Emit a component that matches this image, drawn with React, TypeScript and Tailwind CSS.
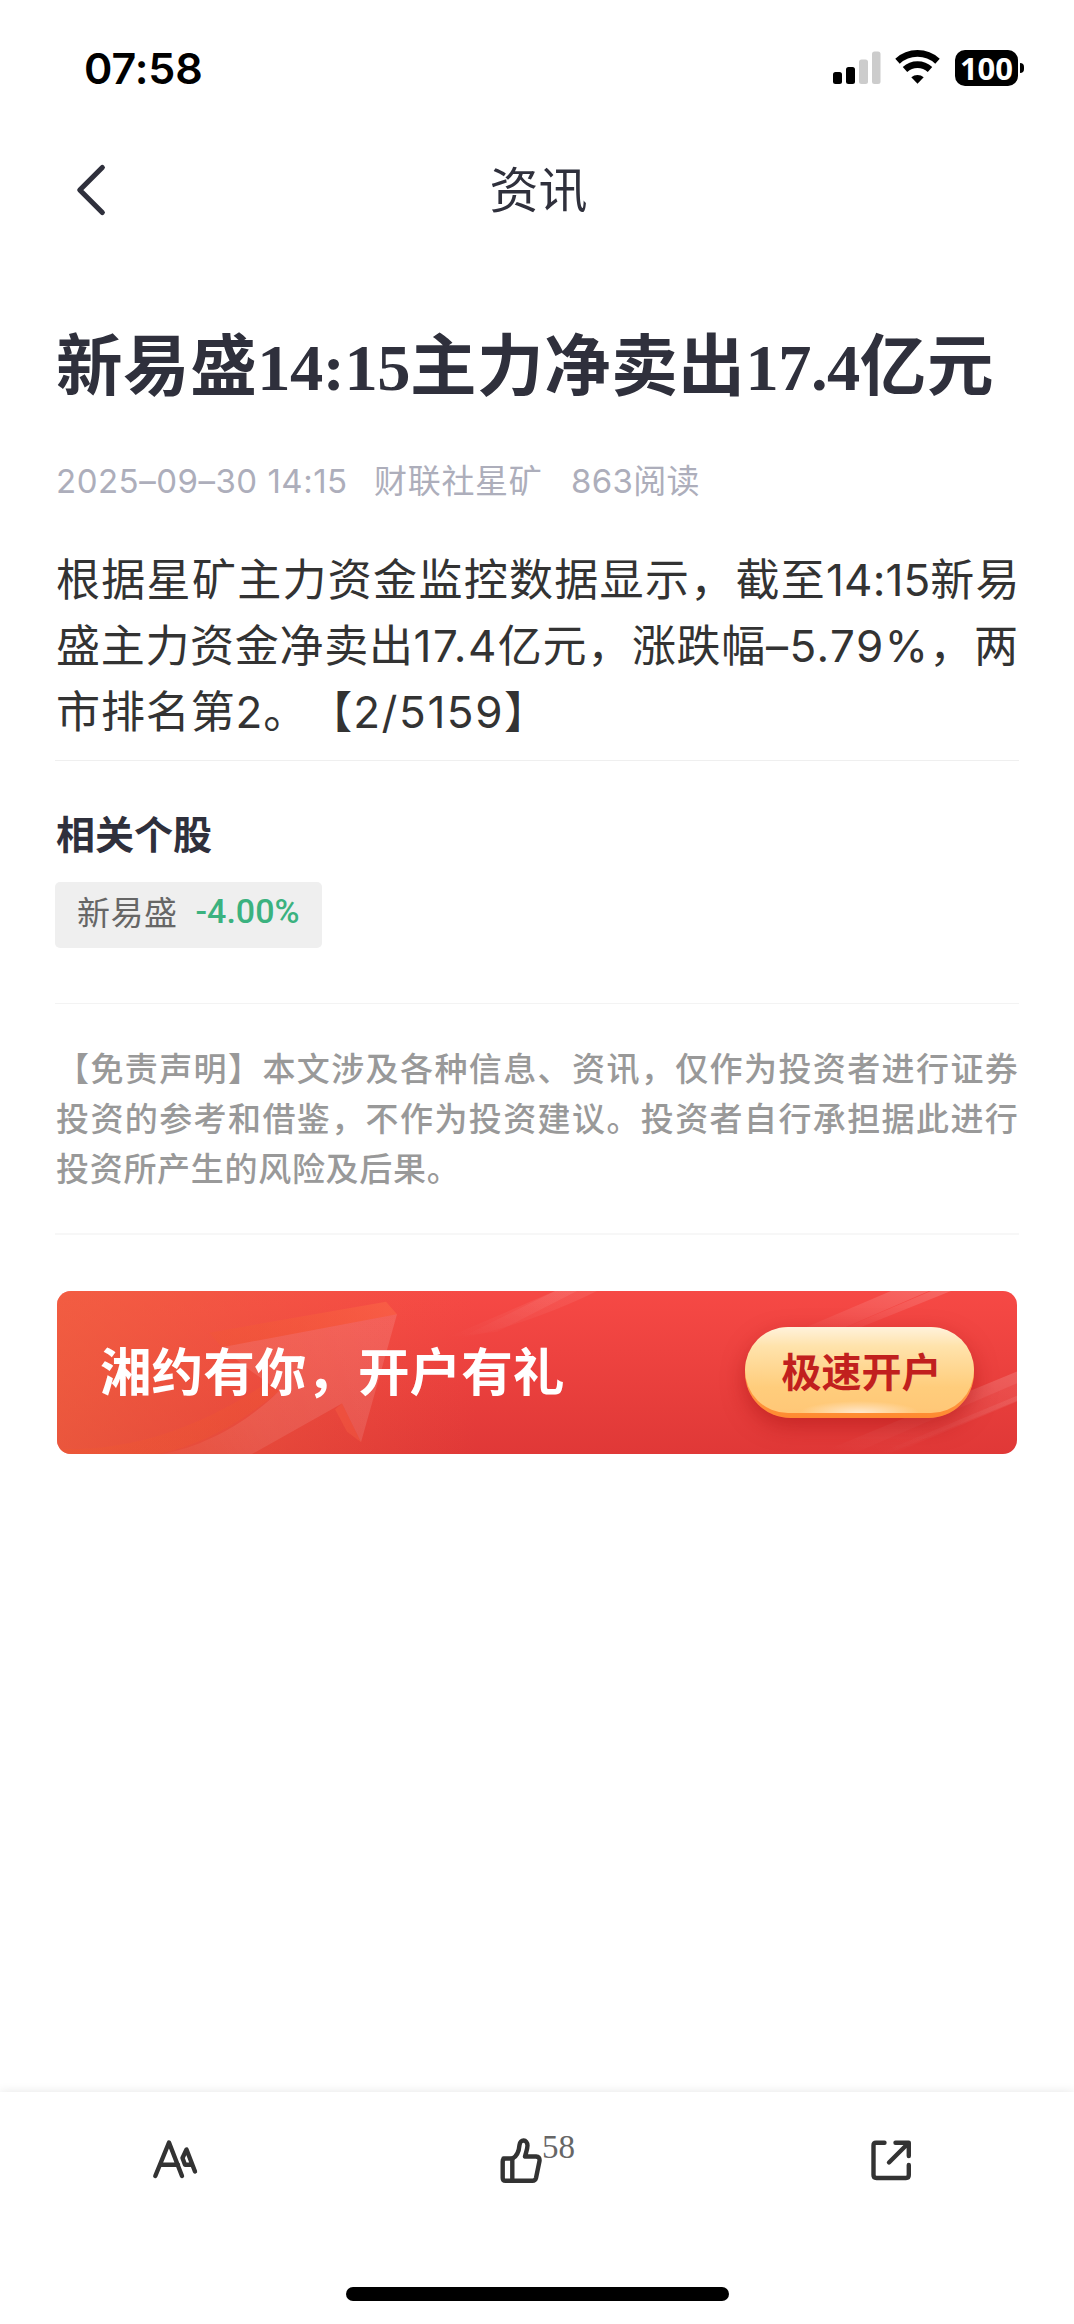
import React from "react";

const cjk = "font-['Inter','Noto_Sans_CJK_SC',sans-serif]";

function StatusBar() {
  return (
    <div className="flex h-[132px] items-start justify-between pl-[84px] pr-[50px] pt-[48px] text-black">
      <span className="font-['Inter',sans-serif] text-[43px] font-semibold leading-[40px] tracking-[-0.1px]">07:58</span>
      <div className="flex items-start">
        <svg className="mr-[14px]" width="108" height="38" viewBox="0 0 108 38" fill="none">
          <rect x="0" y="24" width="9" height="12" rx="2.5" fill="#000" />
          <rect x="13" y="19" width="9" height="17" rx="2.5" fill="#000" />
          <rect x="26" y="11.500" width="9" height="24.500" rx="2.500" fill="#ccc" />
          <rect x="39" y="3.500" width="8.500" height="32.500" rx="2.500" fill="#ccc" />
          <path d="M64.500 13.200A29.500 29.500 0 0 1 104.500 13.200" stroke="#000" strokeWidth="6.600" />
          <path d="M72 21.500A18.500 18.500 0 0 1 97 21.500" stroke="#000" strokeWidth="6.600" />
          <path d="M84.500 35.800L78.300 29.200A9.500 9.500 0 0 1 90.700 29.200Z" fill="#000" />
        </svg>
        <span className="mt-[2px] flex h-[36px] w-[63px] items-center justify-center rounded-[10px] bg-black font-['Noto_Sans',sans-serif] text-[31px] font-bold leading-[36px] text-white">100</span>
        <span className="ml-[2px] mt-[15px] h-[10px] w-[4px] rounded-r-full bg-black" />
      </div>
    </div>
  );
}

function NavBar() {
  return (
    <div className="grid h-[118px] grid-cols-[1fr_auto_1fr] items-center">
      <svg className="ml-[76px]" width="30" height="56" viewBox="0 0 30 56" fill="none">
        <path d="M26.300 4.500L3.800 27L26.300 49.500" stroke="#2f303c" strokeWidth="5.200" strokeLinecap="round" strokeLinejoin="round" />
      </svg>
      <h1 className={`${cjk} pl-[3px] text-[49px] leading-[60px] text-[#2f303c]`}>资讯</h1>
    </div>
  );
}

function Banner() {
  return (
    <div className="relative mx-[2px] mt-[56px] flex h-[163px] items-center justify-between overflow-hidden rounded-[14px] bg-linear-to-b from-[#f64945] to-[#e03837] px-[43px]">
      <svg className="absolute inset-0" width="960" height="163" viewBox="0 0 960 168" preserveAspectRatio="none" fill="none">
        <defs>
          <linearGradient id="warm" x1="0" y1="0" x2="420" y2="0" gradientUnits="userSpaceOnUse">
            <stop stopColor="#f06a40" stopOpacity=".6" />
            <stop offset="1" stopColor="#f06a40" stopOpacity="0" />
          </linearGradient>
          <linearGradient id="ray" x1="0" y1="1" x2="1" y2="0">
            <stop stopColor="#fff" stopOpacity="0" />
            <stop offset="1" stopColor="#fff" stopOpacity=".16" />
          </linearGradient>
          <linearGradient id="soft" x1="0" y1="1" x2="1" y2="0">
            <stop stopColor="#fff" stopOpacity="0" />
            <stop offset="1" stopColor="#fff" stopOpacity=".08" />
          </linearGradient>
          <linearGradient id="arrow" x1="90" y1="168" x2="300" y2="40" gradientUnits="userSpaceOnUse">
            <stop stopColor="#fff" stopOpacity=".02" />
            <stop offset=".45" stopColor="#fff" stopOpacity=".09" />
            <stop offset="1" stopColor="#fff" stopOpacity=".12" />
          </linearGradient>
          <linearGradient id="edge" x1="20" y1="168" x2="330" y2="20" gradientUnits="userSpaceOnUse">
            <stop stopColor="#f25a2c" stopOpacity=".25" />
            <stop offset=".5" stopColor="#f25a2c" stopOpacity=".22" />
            <stop offset="1" stopColor="#fa6446" stopOpacity=".65" />
          </linearGradient>
        </defs>
        <rect width="960" height="168" fill="url(#warm)" />
        <path d="M152 43L329 11L340 24L165 58Z" fill="url(#edge)" />
        <path d="M0 163C80 165 145 138 205 98L222 103C180 140 135 162 100 168H0Z" fill="url(#edge)" />
        <path d="M165 58L340 24L304 156L285 116L195 168H105C150 160 194 132 222 103L188 78Z" fill="url(#arrow)" />
        <path d="M304 156L285 116L278 122L290 145Z" fill="#fa6446" opacity=".35" />
        <path d="M390 48L498 0H520L440 42Z" fill="url(#soft)" />
        <path d="M400 50L498 0H540C500 20 460 36 400 50Z" fill="url(#soft)" />
        <path d="M725 48L834 0H872L760 50Z" fill="url(#ray)" />
        <path d="M765 48L874 0H894L785 45Z" fill="url(#ray)" />
        <path d="M774 162L960 83V95L800 166Z" fill="url(#ray)" />
        <path d="M800 166L960 95V113L830 168Z" fill="url(#soft)" />
        <path d="M820 168L960 108V114L840 166Z" fill="url(#soft)" />
      </svg>
      <span className="relative -mt-[7px] font-['Noto_Sans_CJK_SC',sans-serif] text-[51.600px] font-bold leading-[60px] text-white">湘约有你，开户有礼</span>
      <div className="relative flex h-[91px] w-[229px] justify-center rounded-[46px] bg-linear-to-b from-[#ffb765] to-[#ff8a30] shadow-[0_8px_22px_rgba(165,15,15,0.5)]">
        <div className="flex h-[86px] w-full items-center justify-center rounded-[44px] bg-[radial-gradient(ellipse_60px_12px_at_50%_100%,#ffe9cf,transparent),linear-gradient(to_bottom,#fff2dc_0%,#ffe3ac_22%,#ffcd7c_70%,#ffc777_100%)]">
          <span className="pl-[4px] font-['Noto_Sans_CJK_SC',sans-serif] text-[40px] font-bold leading-[48px] text-[#c1201e]">极速开户</span>
        </div>
      </div>
    </div>
  );
}

function Footer() {
  return (
    <div className="mt-auto h-[232px] bg-white shadow-[0_0_10px_rgba(0,0,0,0.1)]">
      <div className="flex h-[195px] items-start pt-[44px]">
        <svg className="ml-[151px]" width="48" height="50" viewBox="0 0 48 50" fill="none" stroke="#333" strokeWidth="4.400" strokeLinecap="round" strokeLinejoin="round">
          <path d="M4.300 40L18 6.500L31 40M9 28.800H27" />
          <path d="M44 35.500L35.500 13.500L31.500 22L34 28.800H41" />
        </svg>
        <svg className="ml-[299px]" width="46" height="50" viewBox="0 0 46 50" fill="none" stroke="#333" strokeWidth="4.400" strokeLinecap="round" strokeLinejoin="round">
          <path d="M5.500 22.500H14.500C19.500 20 21 15 21.500 9C22 3 29.500 3 29.500 9.500C29.500 13 28 16.500 27 20.500H38Q42 21 41.500 25L38 42Q37.300 44.800 34.500 44.800H7.500Q4.700 44.800 4.700 42V25.500Q4.700 22.500 7.500 22.500" />
          <path d="M14.300 22.500V44.500" />
        </svg>
        <span className="-ml-[2px] -mt-[7px] font-['Liberation_Serif',serif] text-[33px] leading-[36px] text-[#666]">58</span>
        <svg className="ml-[294px]" width="46" height="50" viewBox="0 0 46 50" fill="none" stroke="#333" strokeWidth="4.400" strokeLinecap="round" strokeLinejoin="round">
          <path d="M15.500 6.800H7Q4.500 6.800 4.500 9.500V39Q4.500 42 7.500 42H37Q39.800 42 39.800 39V29" />
          <path d="M26.500 6.800H39.800V20M39 7.500L20 26.500" />
        </svg>
      </div>
      <div className="mx-auto h-[14px] w-[383px] rounded-full bg-black" />
    </div>
  );
}

export default function App() {
  return (
    <div lang="zh-CN" className="flex h-[2324px] w-[1074px] flex-col bg-white [text-spacing-trim:space-all]">
      <StatusBar />
      <NavBar />
      <main className="mx-[55px] mt-[70px]">
        <h2 className="whitespace-nowrap pl-[1px] font-['Liberation_Serif','Noto_Sans_CJK_SC',serif] text-[66.500px] font-bold leading-[96px] tracking-[0.600px] text-[#2f303c]">
          新易盛<span className="tracking-[-0.500px]">14:15</span>主力净卖出<span className="tracking-[-0.500px]">17.4</span>亿元
        </h2>
        <div className={`${cjk} mt-[39px] flex h-[52px] items-center whitespace-nowrap pl-[1px] text-[33px] leading-[52px] text-[#adaebb]`}>
          <span className="w-[318px] tracking-[0.500px]">2025–09–30 14:15</span>
          <span className="w-[197px] tracking-[0.700px]">财联社星矿</span>
          <span className="tracking-[0.300px]">863阅读</span>
        </div>
        <div className={`${cjk} mt-[40px] whitespace-nowrap pl-[1px] text-[44px] leading-[66px] text-[#333]`}>
          <p className="tracking-[1.300px]">根据星矿主力资金监控数据显示，截至<span className="tracking-[0.100px]">14:15</span>新易</p>
          <p className="tracking-[0.700px]">盛主力资金净卖出<span className="tracking-[1.450px]">17.4</span>亿元，涨跌幅<span className="tracking-[1.450px]">–5.79%</span>，两</p>
          <p className="tracking-[0.900px]">市排名第2。【<span className="tracking-[1.600px]">2/5159</span>】</p>
        </div>
        <hr className="mt-[15px] border-t border-[#efefef]" />
        <h3 className="mt-[42px] pl-[1px] font-['Noto_Sans_CJK_SC',sans-serif] text-[39px] font-bold leading-[58px] text-[#2f303c]">相关个股</h3>
        <div className="mt-[21px] flex h-[66px] w-[267px] items-center rounded-[5px] bg-[#efefef] pb-[9px] pl-[22px]">
          <span className="font-['Noto_Sans_CJK_SC',sans-serif] text-[33px] leading-[50px] tracking-[0.500px] text-[#666]">新易盛</span>
          <span className="ml-[18px] font-['Roboto',sans-serif] text-[34px] font-medium leading-[50px] text-[#3bb27f]">-4.00%</span>
        </div>
        <hr className="mt-[55px] border-t border-[#f3f3f3]" />
        <div className="mt-[38px] whitespace-nowrap pl-[1px] font-['Noto_Sans_CJK_SC',sans-serif] text-[33px] font-medium leading-[50px] text-[#999]">
          <p className="tracking-[1.400px]">【免责声明】本文涉及各种信息、资讯，仅作为投资者进行证券</p>
          <p className="tracking-[1.400px]">投资的参考和借鉴，不作为投资建议。投资者自行承担据此进行</p>
          <p className="tracking-[0.700px]">投资所产生的风险及后果。</p>
        </div>
        <hr className="mt-[41px] border-t-2 border-[#f7f7f7]" />
        <Banner />
      </main>
      <Footer />
    </div>
  );
}
